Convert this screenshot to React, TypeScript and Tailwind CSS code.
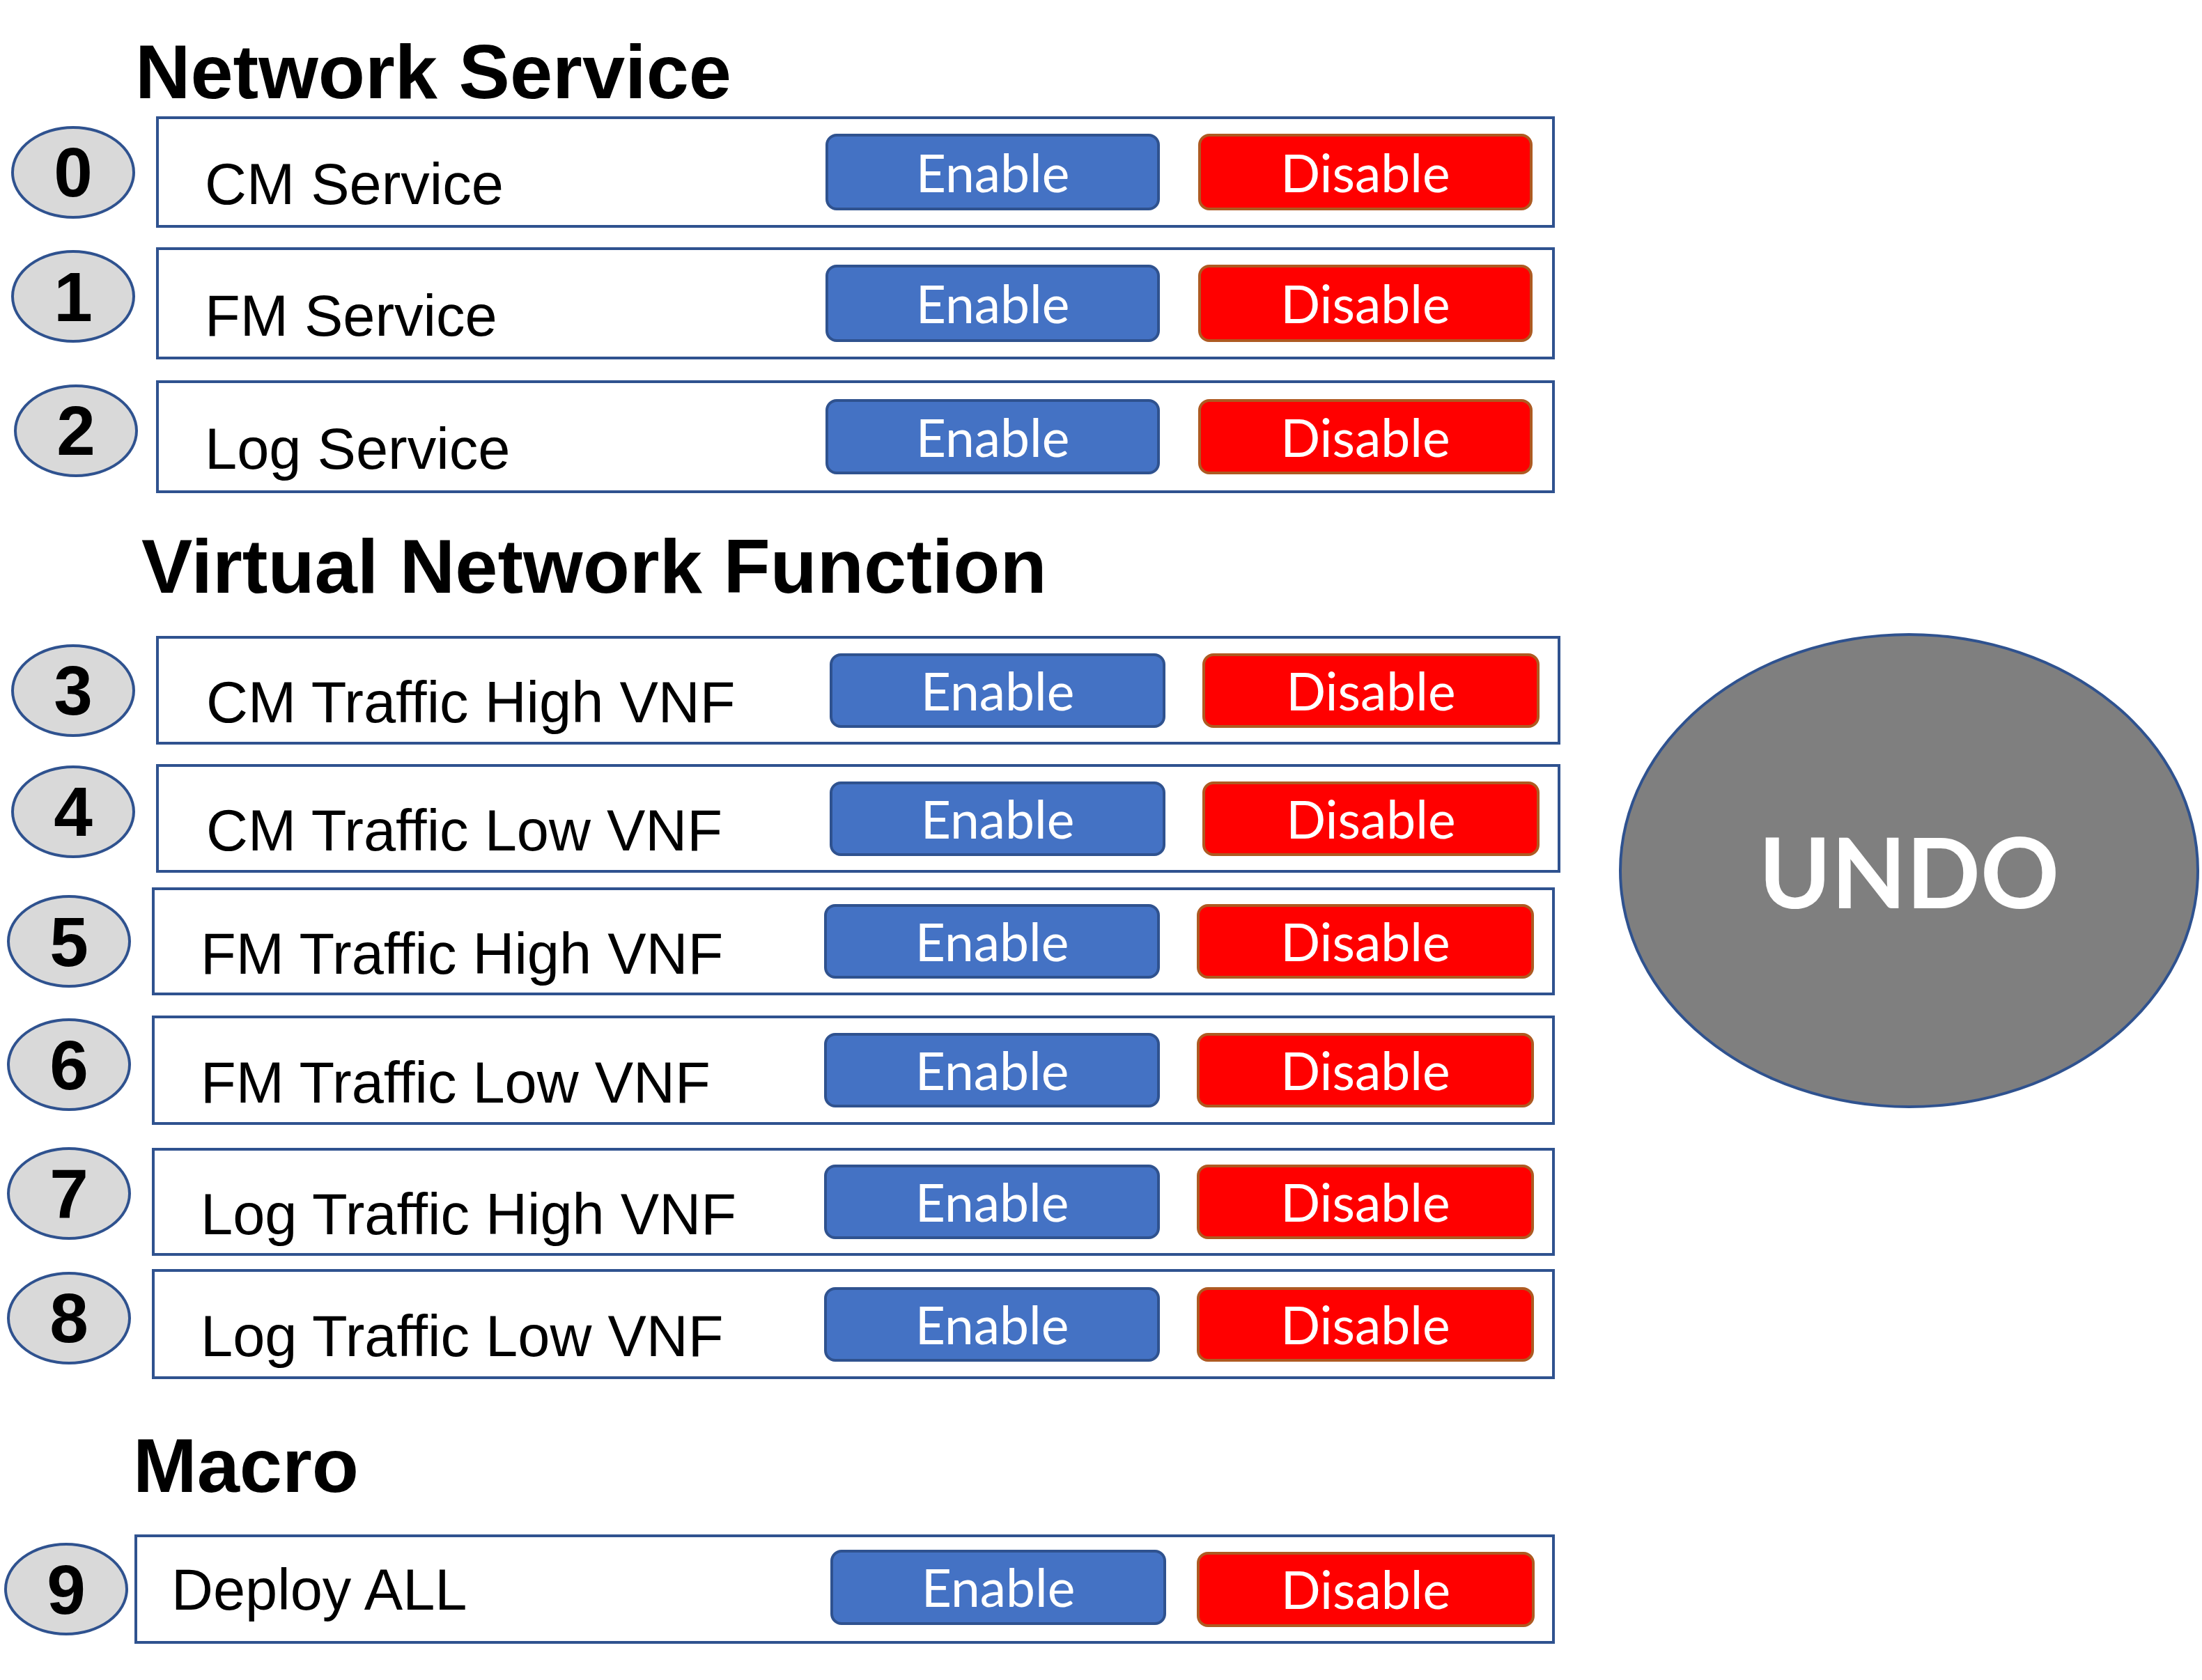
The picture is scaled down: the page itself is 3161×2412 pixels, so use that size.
type Row = {
  n: string;
  label: string;
  row: string;
  circle: string;
  box: string;
  label2: string;
  group: string;
  enable: string;
  disable: string;
};

const serviceRows: Row[] = [
  {
    n: "0",
    label: "CM Service",
    row: "mt-[9px]",
    circle: "ml-[16px]",
    box: "ml-[30px] w-[2008px] h-[160px]",
    label2: "pl-[66px] mt-[35px]",
    group: "gap-[55px] pr-[28px]",
    enable: "w-[480px] h-[110px]",
    disable: "w-[480px] h-[110px]",
  },
  {
    n: "1",
    label: "FM Service",
    row: "mt-[28px]",
    circle: "ml-[16px] mb-[20px]",
    box: "ml-[30px] w-[2008px] h-[161px]",
    label2: "pl-[66px] mt-[35px]",
    group: "gap-[55px] pr-[28px]",
    enable: "w-[480px] h-[111px]",
    disable: "w-[480px] h-[111px]",
  },
  {
    n: "2",
    label: "Log Service",
    row: "mt-[30px]",
    circle: "ml-[20px] mb-[18px]",
    box: "ml-[26px] w-[2008px] h-[162px]",
    label2: "pl-[66px] mt-[35px]",
    group: "gap-[55px] pr-[28px]",
    enable: "w-[480px] h-[108px]",
    disable: "w-[480px] h-[108px]",
  },
];

const vnfRows: Row[] = [
  {
    n: "3",
    label: "CM Traffic High VNF",
    row: "mt-[45px]",
    circle: "ml-[16px]",
    box: "ml-[30px] w-[2016px] h-[156px]",
    label2: "pl-[68px] mt-[35px]",
    group: "gap-[53px] pr-[26px]",
    enable: "w-[482px] h-[107px]",
    disable: "w-[484px] h-[107px]",
  },
  {
    n: "4",
    label: "CM Traffic Low VNF",
    row: "mt-[28px]",
    circle: "ml-[16px] mb-[20px]",
    box: "ml-[30px] w-[2016px] h-[156px]",
    label2: "pl-[68px] mt-[35px]",
    group: "gap-[53px] pr-[26px]",
    enable: "w-[482px] h-[107px]",
    disable: "w-[484px] h-[107px]",
  },
  {
    n: "5",
    label: "FM Traffic High VNF",
    row: "mt-[21px]",
    circle: "ml-[10px]",
    box: "ml-[30px] w-[2014px] h-[155px]",
    label2: "pl-[66px] mt-[35px]",
    group: "gap-[53px] pr-[26px]",
    enable: "w-[482px] h-[107px]",
    disable: "w-[484px] h-[107px]",
  },
  {
    n: "6",
    label: "FM Traffic Low VNF",
    row: "mt-[29px]",
    circle: "ml-[10px] mb-[16px]",
    box: "ml-[30px] w-[2014px] h-[157px]",
    label2: "pl-[66px] mt-[35px]",
    group: "gap-[53px] pr-[26px]",
    enable: "w-[482px] h-[107px]",
    disable: "w-[484px] h-[107px]",
  },
  {
    n: "7",
    label: "Log Traffic High VNF",
    row: "mt-[32px]",
    circle: "ml-[10px] mb-[24px]",
    box: "ml-[30px] w-[2014px] h-[155px]",
    label2: "pl-[66px] mt-[35px]",
    group: "gap-[53px] pr-[26px]",
    enable: "w-[482px] h-[107px]",
    disable: "w-[484px] h-[107px]",
  },
  {
    n: "8",
    label: "Log Traffic Low VNF",
    row: "mt-[18px]",
    circle: "ml-[10px] mb-[18px]",
    box: "ml-[30px] w-[2014px] h-[158px]",
    label2: "pl-[66px] mt-[35px]",
    group: "gap-[53px] pr-[26px]",
    enable: "w-[482px] h-[107px]",
    disable: "w-[484px] h-[107px]",
  },
];

const macroRows: Row[] = [
  {
    n: "9",
    label: "Deploy ALL",
    row: "mt-[44px]",
    circle: "ml-[6px]",
    box: "ml-[9px] w-[2039px] h-[157px]",
    label2: "pl-[49px] mt-[2px]",
    group: "gap-[44px] pr-[25px]",
    enable: "w-[482px] h-[108px] mb-[6px]",
    disable: "w-[485px] h-[108px]",
  },
];

function Heading({ text, className }: { text: string; className: string }) {
  return (
    <div
      className={`h-[110px] font-['Liberation_Sans',Arial,sans-serif] text-[110px] font-bold leading-none text-black ${className}`}
    >
      {text}
    </div>
  );
}

function ServiceRow({ r }: { r: Row }) {
  return (
    <div className={`flex items-center ${r.row}`}>
      <div
        className={`flex h-[133px] w-[178px] shrink-0 items-center justify-center rounded-[50%] border-4 border-[#2F528F] bg-[#D9D9D9] font-['Liberation_Sans',Arial,sans-serif] text-[100px] font-bold leading-none text-black ${r.circle}`}
      >
        {r.n}
      </div>
      <div className={`flex shrink-0 items-center border-4 border-[#2F528F] bg-white ${r.box}`}>
        <div
          className={`flex-1 font-['Liberation_Sans',Arial,sans-serif] text-[83px] leading-none whitespace-nowrap text-black ${r.label2}`}
        >
          {r.label}
        </div>
        <div className={`flex items-center ${r.group}`}>
          <button
            className={`flex items-center justify-center rounded-[16px] border-4 border-[#2F528F] bg-[#4472C4] font-['Lato',sans-serif] text-[75px] leading-none text-white ${r.enable}`}
          >
            Enable
          </button>
          <button
            className={`flex items-center justify-center rounded-[16px] border-4 border-[#AE5A21] bg-[#FF0000] font-['Lato',sans-serif] text-[75px] leading-none text-white ${r.disable}`}
          >
            Disable
          </button>
        </div>
      </div>
    </div>
  );
}

export default function App() {
  return (
    <div className="flex h-[2412px] w-[3161px] bg-white">
      <div className="flex w-[2240px] shrink-0 flex-col">
        <Heading text="Network Service" className="mt-[48px] pl-[194px]" />
        {serviceRows.map((r) => (
          <ServiceRow key={r.n} r={r} />
        ))}
        <Heading text="Virtual Network Function" className="mt-[50px] pl-[203px]" />
        {vnfRows.map((r) => (
          <ServiceRow key={r.n} r={r} />
        ))}
        <Heading text="Macro" className="mt-[69px] pl-[191px]" />
        {macroRows.map((r) => (
          <ServiceRow key={r.n} r={r} />
        ))}
      </div>
      <div className="ml-[84px] mt-[909px] flex h-[682px] w-[833px] shrink-0 items-center justify-center rounded-[50%] border-4 border-[#2F528F] bg-[#7F7F7F]">
        <span className="font-['Lato',sans-serif] text-[140px] font-bold leading-none text-white">UNDO</span>
      </div>
    </div>
  );
}
